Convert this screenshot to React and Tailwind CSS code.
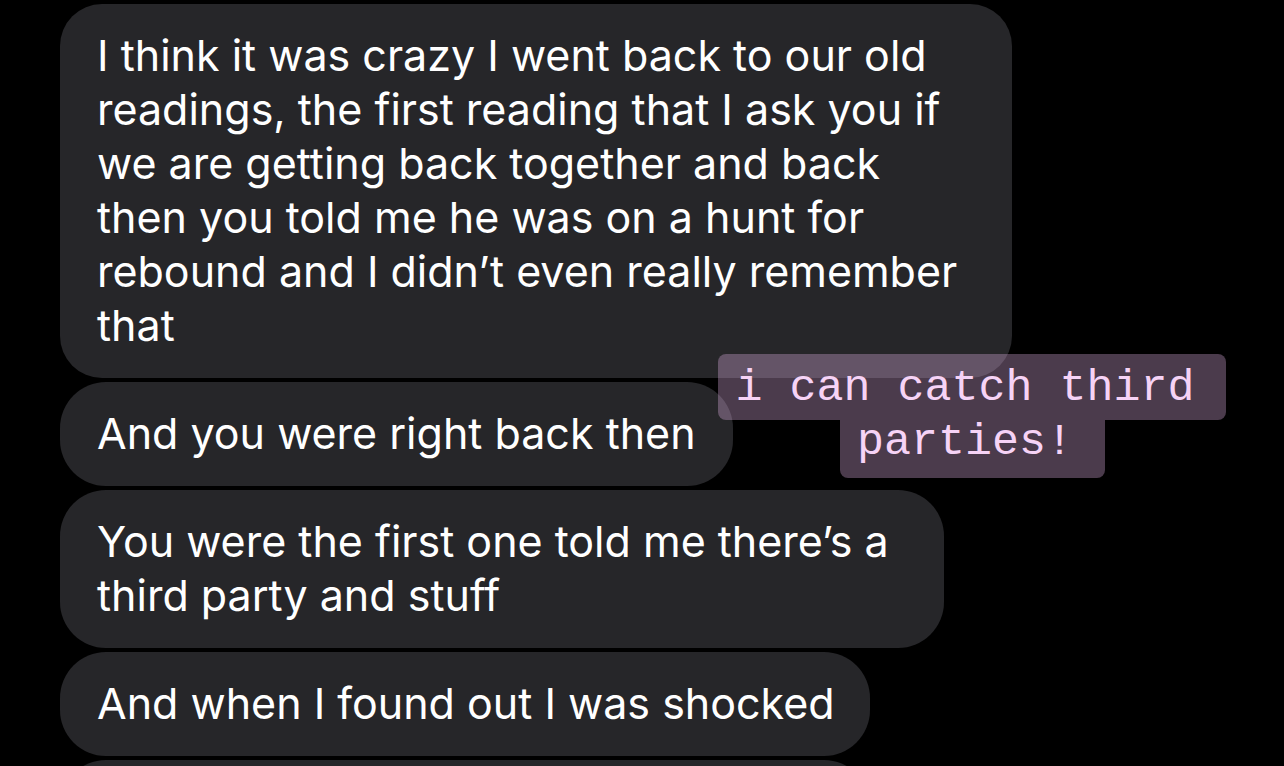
export default function App() {
  const font = { fontFamily: '"Inter", "Liberation Sans", sans-serif' };
  return (
    <div className="relative w-[1284px] h-[766px] bg-black overflow-hidden">
      <div className="flex flex-col gap-1 pl-[60px] pt-1 text-white text-[43px] leading-[54px]" style={font}>
        <div className="w-[952px] h-[374px] rounded-[42px] bg-[#262629] pl-[37px] pt-[24px] whitespace-nowrap">
          I think it was crazy I went back to our old<br />
          readings, the first reading that I ask you if<br />
          we are getting back together and back<br />
          then you told me he was on a hunt for<br />
          rebound and I didn’t even really remember<br />
          that
        </div>
        <div className="w-[673px] h-[104px] rounded-[46px] bg-[#262629] pl-[37px] pt-[24px] whitespace-nowrap">
          And you were right back then
        </div>
        <div className="w-[884px] h-[158px] rounded-[46px] bg-[#262629] pl-[37px] pt-[24px] whitespace-nowrap">
          You were the first one told me there’s a<br />
          third party and stuff
        </div>
        <div className="w-[810px] h-[104px] rounded-[46px] bg-[#262629] pl-[37px] pt-[24px] whitespace-nowrap">
          And when I found out I was shocked
        </div>
        <div className="w-[810px] h-[104px] rounded-[46px] bg-[#262629]"></div>
      </div>
      <div className="absolute left-[718px] top-[354px] flex flex-col items-center text-[#f6d3f6] text-[45px] leading-[53px]" style={{ fontFamily: '"Liberation Mono", monospace' }}>
        <div className="w-[508px] h-[66px] rounded-[8px] bg-[rgba(232,182,236,0.32)] flex items-center justify-center pt-[2px] pr-[14px] whitespace-nowrap">
          i can catch third
        </div>
        <div className="w-[265px] h-[58px] rounded-b-[8px] bg-[rgba(232,182,236,0.32)] flex items-start justify-center pr-[14px] -mt-0 whitespace-nowrap">
          <span className="-mt-[4px]">parties!</span>
        </div>
      </div>
    </div>
  );
}
